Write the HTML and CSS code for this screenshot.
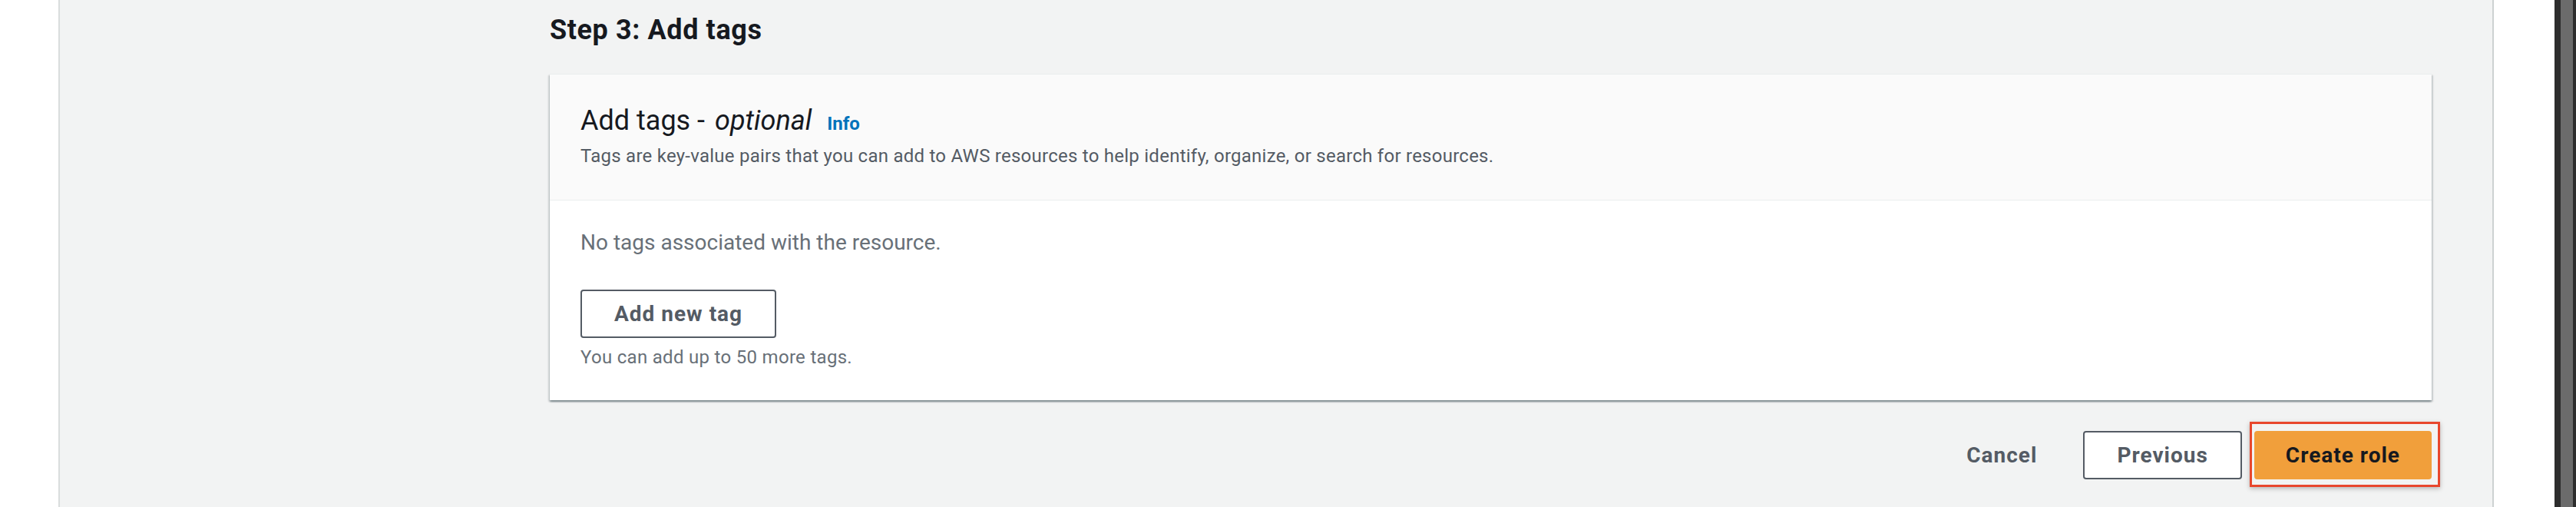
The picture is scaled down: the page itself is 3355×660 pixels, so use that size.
FILE: index.html
```html
<!DOCTYPE html>
<html lang="en">
<head>
<meta charset="utf-8">
<title>Create role - Step 3: Add tags</title>
<link rel="stylesheet" href="styles.css">
</head>
<body>
<div class="page">
  <aside class="left-gutter"></aside>
  <main class="main">
    <div class="content">
      <h2 class="step-title">Step 3: Add tags</h2>
      <section class="container">
        <header class="container-header">
          <h3 class="container-title">Add tags - <i>optional</i><a class="info" href="#">Info</a></h3>
          <p class="container-desc">Tags are key-value pairs that you can add to AWS resources to help identify, organize, or search for resources.</p>
        </header>
        <div class="container-body">
          <p class="empty">No tags associated with the resource.</p>
          <button class="btn btn-normal" type="button">Add new tag</button>
          <p class="hint">You can add up to 50 more tags.</p>
        </div>
      </section>
      <div class="actions">
        <button class="btn btn-link" type="button">Cancel</button>
        <button class="btn btn-normal" type="button">Previous</button>
        <span class="highlight-wrap">
          <button class="btn btn-primary" type="button">Create role</button>
          <span class="annotation"></span>
        </span>
      </div>
    </div>
  </main>
  <div class="right-gutter"></div>
  <div class="scrollbar"><div class="scroll-thumb"></div></div>
</div>
</body>
</html>
```

FILE: styles.css
```css
* {
  box-sizing: border-box;
}

html, body {
  margin: 0;
  padding: 0;
  width: 3355px;
  height: 660px;
  overflow: hidden;
  background: #ffffff;
  font-family: Roboto, "Liberation Sans", Arial, sans-serif;
  color: #16191f;
}

.page {
  display: flex;
  width: 3355px;
  height: 660px;
}

.left-gutter {
  width: 78px;
  flex: none;
  background: #ffffff;
  border-right: 2px solid #d9dddd;
}

.main {
  flex: 1;
  background: #f2f3f3;
  border-right: 2px solid #cdd2d2;
  padding: 17px 79px 0 638px;
}

.content {
  display: flex;
  flex-direction: column;
}

.step-title {
  margin: 0 0 35px 0;
  font-size: 36px;
  line-height: 44px;
  font-weight: 700;
  letter-spacing: 0.6px;
  color: #16191f;
}

.container {
  background: #ffffff;
  border-top: 1px solid #eaeded;
  box-shadow: 0 2px 2px 0 rgba(0, 28, 36, 0.35),
              2px 2px 2px 0 rgba(0, 28, 36, 0.12),
              -2px 2px 2px 0 rgba(0, 28, 36, 0.12);
}

.container-header {
  background: #fafafa;
  padding: 38px 40px 41px 40px;
  border-bottom: 1px solid #eaeded;
}

.container-title {
  margin: 0;
  font-size: 36px;
  line-height: 44px;
  font-weight: 400;
  color: #16191f;
  display: flex;
  align-items: baseline;
}

.container-title i {
  font-style: italic;
  margin-left: 13px;
}

.info {
  margin-left: 20px;
  font-size: 24px;
  line-height: 24px;
  font-weight: 700;
  color: #0073bb;
  text-decoration: none;
}

.container-desc {
  margin: 8px 0 0 0;
  font-size: 24px;
  line-height: 32px;
  letter-spacing: 0.25px;
  color: #545b64;
}

.container-body {
  padding: 35px 40px 40px 40px;
  display: flex;
  flex-direction: column;
  align-items: flex-start;
}

.empty {
  margin: 0 0 41px 0;
  font-size: 28px;
  line-height: 40px;
  color: #687078;
}

.hint {
  margin: 9px 0 0 0;
  font-size: 24px;
  line-height: 32px;
  letter-spacing: 0.3px;
  color: #687078;
}

.btn {
  font-family: Roboto, "Liberation Sans", Arial, sans-serif;
  font-size: 28px;
  font-weight: 700;
  line-height: 43px;
  letter-spacing: 1px;
  padding: 8px 42px;
  border: 2px solid transparent;
  border-radius: 4px;
  background: transparent;
  cursor: pointer;
}

.btn-normal {
  background: #ffffff;
  border-color: #545b64;
  color: #545b64;
}

.btn-link {
  color: #545b64;
}

.btn-primary {
  background: #f19f3b;
  border-color: #f19f3b;
  color: #16191f;
  padding: 8px 39px;
}

.actions {
  margin-top: 40px;
  display: flex;
  justify-content: flex-end;
  align-items: center;
  gap: 16px;
}

.highlight-wrap {
  position: relative;
  display: inline-flex;
}

.annotation {
  position: absolute;
  left: -6px;
  right: -11px;
  top: -12px;
  bottom: -10px;
  border: 3px solid #e8472d;
  box-shadow: 0 2px 6px rgba(0, 0, 0, 0.25);
  pointer-events: none;
}

.right-gutter {
  width: 79px;
  flex: none;
  background: #ffffff;
}

.scrollbar {
  width: 28px;
  flex: none;
  background: #2d2d2d;
  padding: 0 4px 0 8px;
}

.scroll-thumb {
  height: 100%;
  background: #6b6b6b;
}
```
